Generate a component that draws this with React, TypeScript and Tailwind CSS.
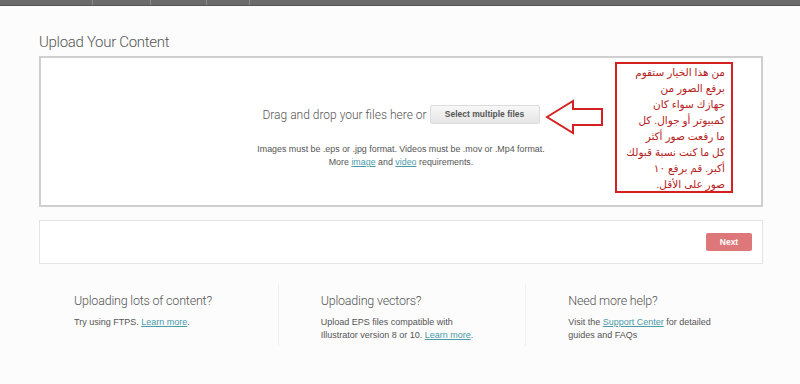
import React from "react";

const navTabs = [93, 58, 56, 43];

function LeftArrow() {
  return (
    <svg width="60" height="36" viewBox="0 0 60 36" className="shrink-0">
      <polygon
        points="2,18 28,2 28,10 57,10 57,26 28,26 28,34"
        fill="white"
        stroke="#d42020"
        strokeWidth="2"
      />
    </svg>
  );
}

const arabicLines = [
  "من هذا الخيار ستقوم",
  "برفع الصور من",
  "جهازك سواء كان",
  "كمبيوتر أو جوال. كل",
  "ما رفعت صور أكثر",
  "كل ما كنت نسبة قبولك",
  "أكبر. قم برفع ١٠",
  "صور على الأقل.",
];

export default function App() {
  return (
    <div className="w-[800px] h-[384px] overflow-hidden bg-[#fcfcfc] font-['Roboto',sans-serif]">
      {/* Top nav strip */}
      <div className="flex h-[6px] bg-[#6b6b6b] border-b border-[#555]">
        {navTabs.map((w, i) => (
          <div key={i} className="h-full border-r border-[#8a8a8a]" style={{ width: w }} />
        ))}
      </div>

      <div className="px-[39px]">
        <h1 className="pt-[26px] text-[15px] leading-[20px] font-light tracking-[-0.3px] text-[#555]">Upload Your Content</h1>

        {/* Drop zone */}
        <div className="relative mt-[4px] h-[151px] w-[724px] border-2 border-[#cfcfcf] bg-white">
          <div className="flex flex-col items-center pt-[47px]">
            <div className="flex items-center gap-[3px]">
              <span className="text-[12px] font-light text-[#555]">Drag and drop your files here or</span>
              <button className="h-[19px] w-[110px] rounded-[2px] border border-[#dcdcdc] bg-gradient-to-b from-[#f7f7f7] to-[#e6e6e6] font-['Liberation_Sans',sans-serif] text-[8.5px] font-bold text-[#555]">
                Select multiple files
              </button>
            </div>
            <p className="mt-[19px] text-center font-['Liberation_Sans',sans-serif] text-[8.9px] leading-[13px] text-[#555]">
              Images must be .eps or .jpg format. Videos must be .mov or .Mp4 format.
              <br />
              More <span className="text-[#4a9aa8] underline">image</span> and{" "}
              <span className="text-[#4a9aa8] underline">video</span> requirements.
            </p>
          </div>

          {/* Annotation overlay */}
          <div className="absolute left-[504px] top-[41px]">
            <LeftArrow />
          </div>
          <div
            dir="rtl"
            className="absolute left-[574px] top-[4px] h-[131px] w-[118px] border-2 border-[#d42020] bg-white px-[6px] font-['Liberation_Sans','DejaVu_Sans',sans-serif] text-[10.5px] leading-[16px] text-[#b52222]"
          >
            {arabicLines.map((l, i) => (
              <div key={i} className="whitespace-nowrap">{l}</div>
            ))}
          </div>
        </div>

        {/* Next bar */}
        <div className="mt-[13px] flex h-[44px] w-[724px] items-center justify-end border border-[#e4e4e4] bg-white pr-[10px]">
          <button className="h-[18px] w-[46px] rounded-[2px] bg-[#dd7779] font-['Liberation_Sans',sans-serif] text-[8.5px] font-bold text-white">
            Next
          </button>
        </div>
      </div>

      {/* Help columns */}
      <div className="mt-[20px] flex px-[35px]">
        <div className="w-[245px] border-r border-[#f0f0f0] pl-[39px] h-[62px]">
          <h3 className="pt-[8px] text-[12.5px] font-light tracking-[-0.2px] text-[#555]">Uploading lots of content?</h3>
          <p className="mt-[5px] font-['Liberation_Sans',sans-serif] text-[9px] leading-[13px] text-[#555]">
            Try using FTPS. <span className="text-[#4a9aa8] underline">Learn more</span>.
          </p>
        </div>
        <div className="w-[249px] border-r border-[#f0f0f0] pl-[42px] h-[62px]">
          <h3 className="pt-[8px] text-[12.5px] font-light tracking-[-0.2px] text-[#555]">Uploading vectors?</h3>
          <p className="mt-[5px] font-['Liberation_Sans',sans-serif] text-[9px] leading-[13px] text-[#555]">
            Upload EPS files compatible with
            <br />
            Illustrator version 8 or 10. <span className="text-[#4a9aa8] underline">Learn more</span>.
          </p>
        </div>
        <div className="w-[240px] pl-[42px] h-[62px]">
          <h3 className="pt-[8px] text-[12.5px] font-light tracking-[-0.2px] text-[#555]">Need more help?</h3>
          <p className="mt-[5px] font-['Liberation_Sans',sans-serif] text-[9px] leading-[13px] text-[#555]">
            Visit the <span className="text-[#4a9aa8] underline">Support Center</span> for detailed
            <br />
            guides and FAQs
          </p>
        </div>
      </div>
    </div>
  );
}
